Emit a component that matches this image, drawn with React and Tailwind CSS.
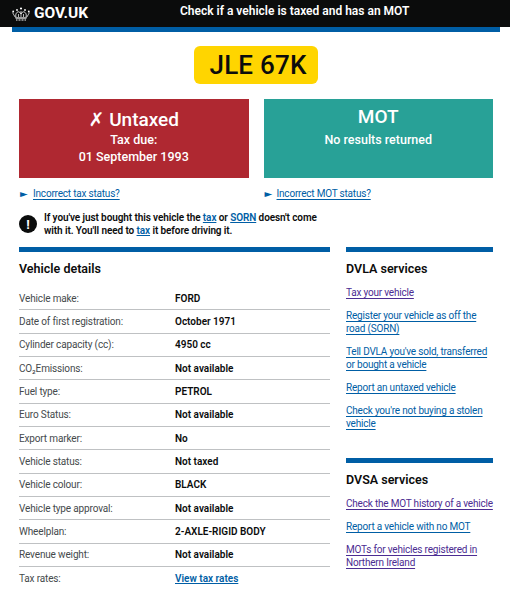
const details = [
  ['Vehicle make:', 'FORD'],
  ['Date of first registration:', 'October 1971'],
  ['Cylinder capacity (cc):', '4950 cc'],
  ['CO₂Emissions:', 'Not available'],
  ['Fuel type:', 'PETROL'],
  ['Euro Status:', 'Not available'],
  ['Export marker:', 'No'],
  ['Vehicle status:', 'Not taxed'],
  ['Vehicle colour:', 'BLACK'],
  ['Vehicle type approval:', 'Not available'],
  ['Wheelplan:', '2-AXLE-RIGID BODY'],
  ['Revenue weight:', 'Not available'],
];

const dvla = [
  { text: 'Tax your vehicle', visited: true },
  { text: 'Register your vehicle as off the road (SORN)' },
  { text: "Tell DVLA you've sold, transferred or bought a vehicle" },
  { text: 'Report an untaxed vehicle' },
  { text: "Check you're not buying a stolen vehicle" },
];

const dvsa = [
  { text: 'Check the MOT history of a vehicle', visited: true },
  { text: 'Report a vehicle with no MOT' },
  { text: 'MOTs for vehicles registered in Northern Ireland', visited: true },
];

function Crown() {
  return (
    <svg width="18" height="15" viewBox="0 0 18 15" fill="none" stroke="#fff" strokeWidth="0.8">
      <path d="M3.5 11.5 C2 9 1 8 0.8 6.5 M14.5 11.5 C16 9 17 8 17.2 6.5" />
      <path d="M4 11 C3 8 5 5 7.5 6 L9 8 L10.5 6 C13 5 15 8 14 11" />
      <path d="M9 5 V11 M6.5 8 V11 M11.5 8 V11" strokeWidth="0.7" />
      <path d="M3.5 12 H14.5" strokeWidth="1.2" />
      <path d="M4 14 H14" strokeWidth="1.2" strokeDasharray="1 0.5" />
      <circle cx="9" cy="2.5" r="1.1" fill="#fff" stroke="none" />
      <circle cx="5" cy="4" r="0.9" fill="#fff" stroke="none" />
      <circle cx="13" cy="4" r="0.9" fill="#fff" stroke="none" />
      <circle cx="1.2" cy="5.5" r="0.9" fill="#fff" stroke="none" />
      <circle cx="16.8" cy="5.5" r="0.9" fill="#fff" stroke="none" />
    </svg>
  );
}

function ServiceList({ title, links, className }) {
  return (
    <section className={className}>
      <div className="h-[5px] bg-[#005ea5]" />
      <h2 className="mt-[8px] text-[12.5px] leading-[18px] font-semibold text-[#0b0c0c]">{title}</h2>
      <ul className="mt-[8px] flex flex-col gap-[10px]">
        {links.map((link) => (
          <li key={link.text} className="text-[10px] leading-[13px] tracking-[-0.2px]">
            <a href="#" className={`underline underline-offset-2 ${link.visited ? 'text-[#4c2c92]' : 'text-[#005ea5]'}`}>
              {link.text}
            </a>
          </li>
        ))}
      </ul>
    </section>
  );
}

export default function App() {
  return (
    <div className="h-[600px] overflow-hidden bg-white font-['Roboto',sans-serif] text-[#0b0c0c]">
      <header className="h-[27px] bg-[#0b0c0c] flex items-center text-white">
        <div className="ml-[12px] flex items-center gap-[4px] w-[168px]">
          <Crown />
          <span className="text-[15.5px] leading-none font-bold">GOV.UK</span>
        </div>
        <span className="text-[12px] font-semibold leading-none -mt-[5px]">Check if a vehicle is taxed and has an MOT</span>
      </header>
      <div className="ml-[12px] mr-[10px] h-[5px] bg-[#005ea5]" />

      <div className="pl-[19px] pr-[17px]">
        <div className="mt-[14px] flex justify-center">
          <div className="w-[124px] h-[38px] rounded-[6px] bg-[#ffd500] flex items-center justify-center text-[26px] font-medium tracking-[0.2px] text-[#0b0c0c] pl-[4px] pt-[1px]">
            JLE 67K
          </div>
        </div>

        <div className="mt-[15px] grid grid-cols-2 gap-[15px] text-white text-center">
          <div className="h-[79px] bg-[#af2831] pt-[9px]">
            <p className="text-[19px] leading-[22px] font-medium"><span className="font-['DejaVu_Sans',sans-serif] font-normal">✗</span> Untaxed</p>
            <p className="text-[12.5px] leading-[17px] font-medium">Tax due:</p>
            <p className="text-[12.5px] leading-[17px] font-medium">01 September 1993</p>
          </div>
          <div className="h-[79px] bg-[#28a197] pt-[7px]">
            <p className="text-[19px] leading-[22px] font-medium">MOT</p>
            <p className="mt-[3px] text-[12.5px] leading-[17px] font-medium">No results returned</p>
          </div>
        </div>

        <div className="mt-[9px] grid grid-cols-2 gap-[15px] text-[10px] leading-[14px] tracking-[-0.2px] text-[#005ea5]">
          <div className="flex items-center">
            <span className="w-[14px] pl-[1px] text-[10px] font-['DejaVu_Sans',sans-serif]">►</span>
            <a href="#" className="underline underline-offset-2">Incorrect tax status?</a>
          </div>
          <div className="flex items-center">
            <span className="w-[13px] pl-[1px] text-[10px] font-['DejaVu_Sans',sans-serif]">►</span>
            <a href="#" className="underline underline-offset-2">Incorrect MOT status?</a>
          </div>
        </div>

        <div className="mt-[10px] flex items-center gap-[7px]">
          <div className="w-[18px] h-[18px] rounded-full bg-[#0b0c0c] text-white flex items-center justify-center text-[13px] leading-none font-bold">!</div>
          <p className="text-[10px] leading-[13px] font-semibold tracking-[-0.1px] w-[290px]">
            If you've just bought this vehicle the <a href="#" className="underline text-[#005ea5]">tax</a> or <a href="#" className="underline text-[#005ea5]">SORN</a> doesn't come with it. You'll need to <a href="#" className="underline text-[#005ea5]">tax</a> it before driving it.
          </p>
        </div>

        <div className="mt-[10px] flex gap-[16px]">
          <section className="w-[311px]">
            <div className="h-[5px] bg-[#005ea5]" />
            <h2 className="mt-[8px] text-[12.5px] leading-[18px] font-semibold">Vehicle details</h2>
            <div className="mt-[9px] text-[10px]">
              {details.map(([label, value]) => (
                <div key={label} className="h-[23.35px] flex items-center border-b border-[#bfc1c3]">
                  <span className="w-[156px] tracking-[-0.15px] text-[#454a4c]">{label}</span>
                  <span className="font-semibold">{value}</span>
                </div>
              ))}
              <div className="h-[23.35px] flex items-center">
                <span className="w-[156px] tracking-[-0.15px] text-[#454a4c]">Tax rates:</span>
                <a href="#" className="font-semibold underline text-[#005ea5]">View tax rates</a>
              </div>
            </div>
          </section>
          <aside className="w-[147px]">
            <ServiceList title="DVLA services" links={dvla} />
            <ServiceList title="DVSA services" links={dvsa} className="mt-[28px]" />
          </aside>
        </div>
      </div>
    </div>
  );
}
